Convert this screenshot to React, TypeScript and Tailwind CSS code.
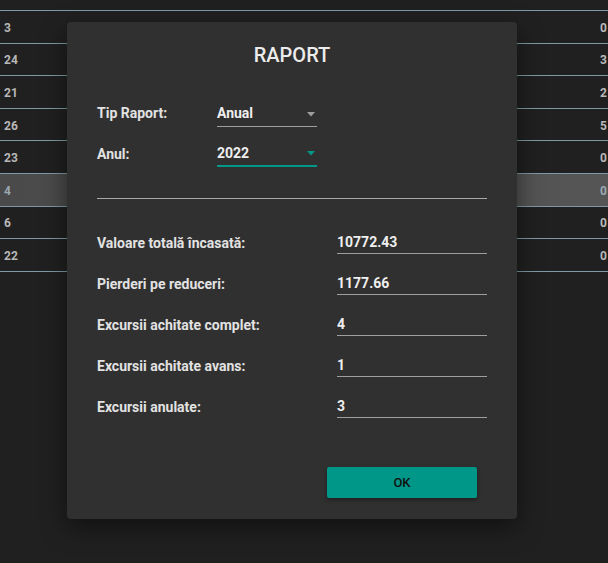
import React from "react";

const rows = [
  { a: "3", b: "0" },
  { a: "24", b: "3" },
  { a: "21", b: "2" },
  { a: "26", b: "5" },
  { a: "23", b: "0" },
  { a: "4", b: "0", sel: true },
  { a: "6", b: "0" },
  { a: "22", b: "0" },
];

const stats = [
  ["Valoare totală încasată:", "10772.43"],
  ["Pierderi pe reduceri:", "1177.66"],
  ["Excursii achitate complet:", "4"],
  ["Excursii achitate avans:", "1"],
  ["Excursii anulate:", "3"],
];

function Caret({ color }: { color: string }) {
  return (
    <svg width="8" height="5" viewBox="0 0 8 5" className="absolute right-[2px] top-[13px]">
      <path d="M0 0 L8 0 L4 4.5 Z" fill={color} />
    </svg>
  );
}

export default function App() {
  return (
    <div
      className="relative w-[608px] h-[563px] overflow-hidden bg-[#202020]"
      style={{ fontFamily: "Roboto, 'Noto Sans', sans-serif" }}
    >
      <div className="h-[11px] border-b border-[#7f99a6]" />
      {rows.map((r, i) => (
        <div
          key={i}
          className={`flex items-center justify-between h-[32.6px] pt-[2px] border-b border-[#7f99a6] text-[12px] font-bold ${
            r.sel ? "bg-gradient-to-r from-[#4a4a4a] to-[#555555] text-[#9aa8b0]" : "text-[#b8b8b8]"
          }`}
        >
          <span className="pl-[4px]">{r.a}</span>
          <span className="pr-[1px]">{r.b}</span>
        </div>
      ))}

      <div className="absolute left-[67px] top-[22px] w-[450px] h-[497px] rounded-[4px] bg-[#303030] shadow-[0_8px_24px_rgba(0,0,0,0.5)] px-[30px] flex flex-col">
        <div className="h-[64px] flex items-center justify-center pt-[1px] text-[20px] font-medium text-[#ececec]">
          RAPORT
        </div>

        <div className="mt-[13px] flex items-end h-[28px]">
          <div className="w-[120px] text-[14px] font-bold text-[#e2e2e2] pb-[3px]">Tip Raport:</div>
          <div className="relative w-[100px] h-[28px] border-b border-[#9e9e9e] flex items-end pb-[4px]">
            <span className="text-[14px] font-bold leading-[18px] text-[#eeeeee]">Anual</span>
            <Caret color="#9e9e9e" />
          </div>
        </div>

        <div className="mt-[11px] flex items-end h-[29px]">
          <div className="w-[120px] text-[14px] font-bold text-[#e2e2e2] pb-[2px]">Anul:</div>
          <div className="relative w-[100px] h-[29px] border-b-2 border-[#009688] flex items-end pb-[3px]">
            <span className="text-[14px] font-bold leading-[18px] text-[#eeeeee]">2022</span>
            <Caret color="#009688" />
          </div>
        </div>

        <div className="mt-[31px] h-[1px] bg-[#a8a8a8]" />

        <div className="mt-[27px] flex flex-col gap-[13px]">
          {stats.map(([l, v], i) => (
            <div key={i} className="flex items-end h-[28px]">
              <div className="w-[240px] text-[14px] font-bold text-[#e2e2e2] pb-[0px]">{l}</div>
              <div className="w-[150px] h-[28px] border-b border-[#9e9e9e] flex items-end pb-[2px] text-[14px] leading-[18px] font-bold text-[#eeeeee]">
                {v}
              </div>
            </div>
          ))}
        </div>

        <div className="mt-auto mb-[21px] flex justify-end pr-[10px]">
          <button className="w-[150px] h-[31px] rounded-[2px] bg-[#009688] text-[13px] font-medium text-[#111] shadow-[0_2px_4px_rgba(0,0,0,0.4)]">
            OK
          </button>
        </div>
      </div>
    </div>
  );
}
